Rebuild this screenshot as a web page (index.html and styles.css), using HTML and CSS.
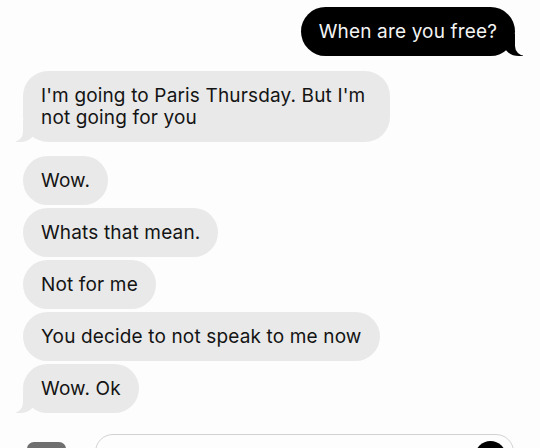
FILE: index.html
```html
<!DOCTYPE html>
<html>
<head>
<meta charset="utf-8">
<link rel="stylesheet" href="styles.css">
</head>
<body>
<div class="chat">
  <div class="row-out">
    <div class="bubble out tail-out">When are you free?</div>
  </div>
  <div class="group">
    <div class="bubble in tail-in wide">I'm going to Paris Thursday. But I'm not going for you</div>
  </div>
  <div class="group stack">
    <div class="bubble in">Wow.</div>
    <div class="bubble in">Whats that mean.</div>
    <div class="bubble in">Not for me</div>
    <div class="bubble in">You decide to not speak to me now</div>
    <div class="bubble in tail-in">Wow. Ok</div>
  </div>
</div>
<div class="composer">
  <div class="app-btn"></div>
  <div class="field">
    <div class="send"></div>
  </div>
</div>
</body>
</html>
```
FILE: styles.css
```css
html, body {
  margin: 0;
  padding: 0;
  background: #fdfdfd;
}
body {
  width: 540px;
  height: 448px;
  overflow: hidden;
  font-family: Inter, "Liberation Sans", Arial, sans-serif;
  font-size: 19px;
  letter-spacing: 0.15px;
  color: #141414;
}
.chat {
  display: flex;
  flex-direction: column;
  padding: 7px 25px 0 23px;
}
.row-out {
  display: flex;
  justify-content: flex-end;
}
.group {
  display: flex;
  flex-direction: column;
  align-items: flex-start;
  margin-top: 15px;
}
.stack {
  margin-top: 14px;
  gap: 3px;
}
.bubble {
  position: relative;
  line-height: 22px;
  padding: 13.5px 18px;
  border-radius: 25px;
  box-sizing: border-box;
}
.in {
  background: #e9e9e9;
}
.out {
  background: #000;
  color: #f4f4f4;
}
.wide {
  width: 367px;
  padding-right: 16px;
}
.tail-in::before {
  content: "";
  position: absolute;
  bottom: 0;
  left: -7px;
  width: 20px;
  height: 22px;
  background: #e9e9e9;
  border-bottom-right-radius: 16px 14px;
}
.tail-in::after {
  content: "";
  position: absolute;
  bottom: 0;
  left: -26px;
  width: 26px;
  height: 24px;
  background: #fdfdfd;
  border-bottom-right-radius: 10px;
}
.tail-out::before {
  content: "";
  position: absolute;
  bottom: 0;
  right: -8px;
  width: 20px;
  height: 22px;
  background: #000;
  border-bottom-left-radius: 16px 14px;
}
.tail-out::after {
  content: "";
  position: absolute;
  bottom: 0;
  right: -26px;
  width: 26px;
  height: 24px;
  background: #fdfdfd;
  border-bottom-left-radius: 10px;
}
.composer {
  display: flex;
  align-items: flex-start;
  margin-top: 21px;
  padding-left: 27px;
}
.app-btn {
  width: 39px;
  height: 30px;
  margin-top: 8px;
  background: #6f6f6f;
  border-radius: 7px;
}
.field {
  margin-left: 29px;
  width: 419px;
  height: 36px;
  border: 1px solid #d2d2d2;
  border-radius: 18px;
  box-sizing: border-box;
  display: flex;
  justify-content: flex-end;
  padding: 6px 7px 0 0;
  background: #fdfdfd;
}
.send {
  width: 31px;
  height: 31px;
  border-radius: 50%;
  background: #000;
}
```
